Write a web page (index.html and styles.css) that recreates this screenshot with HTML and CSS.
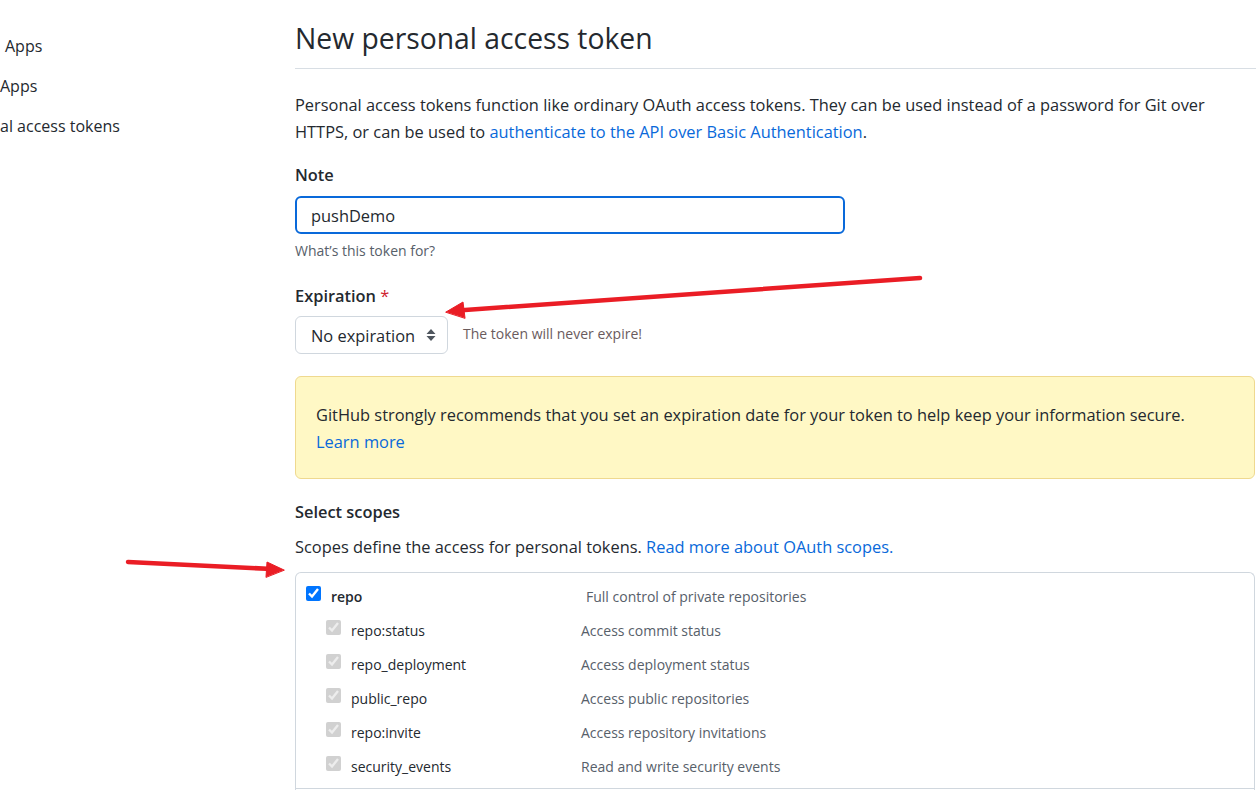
FILE: index.html
```html
<!DOCTYPE html>
<html lang="en">
<head>
<meta charset="utf-8">
<title>New personal access token</title>
<link rel="stylesheet" href="styles.css">
</head>
<body>
<div class="layout">
  <nav class="sidebar">
    <a class="nav-item first" href="#">Apps</a>
    <a class="nav-item" href="#">Apps</a>
    <a class="nav-item" href="#">al access tokens</a>
  </nav>
  <main class="content">
    <h1 class="subhead">New personal access token</h1>
    <p class="intro">Personal access tokens function like ordinary OAuth access tokens. They can be used instead of a password for Git over HTTPS, or can be used to <a href="#">authenticate to the API over Basic Authentication</a>.</p>

    <label class="field-label" for="note">Note</label>
    <input class="text-input" id="note" type="text" value="pushDemo">
    <div class="hint">What’s this token for?</div>

    <div class="field-label exp-label">Expiration <span class="req">*</span></div>
    <div class="exp-row">
      <div class="select">
        <span>No expiration</span>
        <svg class="sel-icon" width="12" height="16" viewBox="0 0 12 16"><path d="M6 2 L10.5 7 H1.5 Z M6 14 L1.5 9 H10.5 Z" fill="#4f565e"/></svg>
      </div>
      <span class="exp-note">The token will never expire!</span>
    </div>

    <div class="flash">
      GitHub strongly recommends that you set an expiration date for your token to help keep your information secure.<br>
      <a href="#">Learn more</a>
    </div>

    <div class="field-label scopes-title">Select scopes</div>
    <p class="scopes-desc">Scopes define the access for personal tokens. <a href="#">Read more about OAuth scopes.</a></p>

    <div class="scopes">
      <div class="scope-group">
        <div class="scope-row main">
          <label class="scope-name"><input type="checkbox" checked> <b>repo</b></label>
          <span class="scope-desc">Full control of private repositories</span>
        </div>
        <div class="scope-row sub">
          <label class="scope-name"><input type="checkbox" checked disabled> repo:status</label>
          <span class="scope-desc">Access commit status</span>
        </div>
        <div class="scope-row sub">
          <label class="scope-name"><input type="checkbox" checked disabled> repo_deployment</label>
          <span class="scope-desc">Access deployment status</span>
        </div>
        <div class="scope-row sub">
          <label class="scope-name"><input type="checkbox" checked disabled> public_repo</label>
          <span class="scope-desc">Access public repositories</span>
        </div>
        <div class="scope-row sub">
          <label class="scope-name"><input type="checkbox" checked disabled> repo:invite</label>
          <span class="scope-desc">Access repository invitations</span>
        </div>
        <div class="scope-row sub">
          <label class="scope-name"><input type="checkbox" checked disabled> security_events</label>
          <span class="scope-desc">Read and write security events</span>
        </div>
      </div>
      <div class="scope-group next"></div>
    </div>
  </main>
</div>

<svg class="annotations" width="1256" height="790" viewBox="0 0 1256 790">
  <g fill="#ea1d25" stroke="#ea1d25" stroke-linecap="round">
    <line x1="920" y1="278" x2="458" y2="310.5" stroke-width="4.5"/>
    <polygon points="446,312 463,302 465,318" stroke-width="1" stroke-linejoin="round"/>
    <line x1="128" y1="562" x2="272" y2="569" stroke-width="4.5"/>
    <polygon points="284,570 267,562 266,577" stroke-width="1" stroke-linejoin="round"/>
  </g>
</svg>
</body>
</html>
```

FILE: styles.css
```css
* { box-sizing: border-box; }

html, body {
  margin: 0;
  padding: 0;
  background: #ffffff;
}

body {
  font-family: "Open Sans", "Noto Sans", "Liberation Sans", Arial, sans-serif;
  font-size: 16.4px;
  color: #24292f;
  width: 1256px;
  height: 790px;
  overflow: hidden;
  position: relative;
}

a { color: #0969da; text-decoration: none; }

.layout {
  display: flex;
}

.sidebar {
  width: 295px;
  flex: none;
  padding-top: 26px;
  display: flex;
  flex-direction: column;
}

.nav-item {
  color: #24292f;
  line-height: 40px;
  font-size: 16px;
}
.nav-item.first { padding-left: 5px; }

.content {
  flex: 1;
  min-width: 0;
}

.subhead {
  margin: 0;
  padding-top: 21px;
  padding-bottom: 12px;
  font-size: 28.3px;
  line-height: 35px;
  font-weight: 400;
  border-bottom: 1px solid #d8dee4;
}

.intro {
  margin: 22px 0 0;
  line-height: 27px;
  padding-right: 20px;
}

.field-label {
  display: block;
  font-weight: 600;
  line-height: 24px;
  margin-top: 18px;
}

.text-input {
  display: block;
  margin-top: 9px;
  width: 550px;
  height: 38px;
  border: 2px solid #0969da;
  border-radius: 6px;
  padding: 0 14px;
  font-family: inherit;
  font-size: 16.4px;
  color: #24292f;
  outline: none;
}

.hint {
  margin-top: 7px;
  font-size: 14px;
  line-height: 20px;
  color: #57606a;
}

.exp-label { margin-top: 23px; }
.req { color: #cf222e; font-weight: 400; }

.exp-row {
  margin-top: 8px;
  display: flex;
  align-items: center;
  gap: 15px;
}

.select {
  width: 153px;
  height: 38px;
  border: 1px solid #d0d7de;
  border-radius: 6px;
  display: flex;
  align-items: center;
  justify-content: space-between;
  padding: 0 10px 0 15px;
  background: #fff;
}

.exp-note {
  font-size: 14px;
  color: #6a5b5d;
  position: relative;
  top: -2px;
}

.flash {
  margin-top: 22px;
  margin-right: 1px;
  background: #fff8c5;
  border: 1px solid #efd98f;
  border-radius: 6px;
  padding: 24px 20px 23px;
  line-height: 27px;
}

.scopes-title { margin-top: 21px; }

.scopes-desc {
  margin: 11px 0 0;
  line-height: 24px;
}

.scopes {
  margin-top: 13px;
  margin-right: 1px;
  border: 1px solid #d0d7de;
  border-bottom: none;
  border-radius: 6px 6px 0 0;
  padding-top: 6px;
  font-size: 14px;
}

.scope-group {
  border-bottom: 1px solid #d0d7de;
  padding-bottom: 5px;
}

.scope-row {
  display: flex;
  align-items: center;
  height: 34px;
}

.scope-row.main { padding-left: 10px; }
.scope-row.sub { padding-left: 30px; }

.scope-name {
  display: flex;
  align-items: center;
  gap: 10px;
  color: #24292f;
}
.scope-row.main .scope-name { width: 280px; }
.scope-row.sub .scope-name { width: 255px; }
.scope-name b { font-weight: 600; }

.scope-name input {
  margin: 0;
  width: 15px;
  height: 15px;
  position: relative;
  top: -3px;
}

.scope-desc {
  color: #57606a;
}

.annotations {
  position: absolute;
  left: 0;
  top: 0;
  pointer-events: none;
}
```
